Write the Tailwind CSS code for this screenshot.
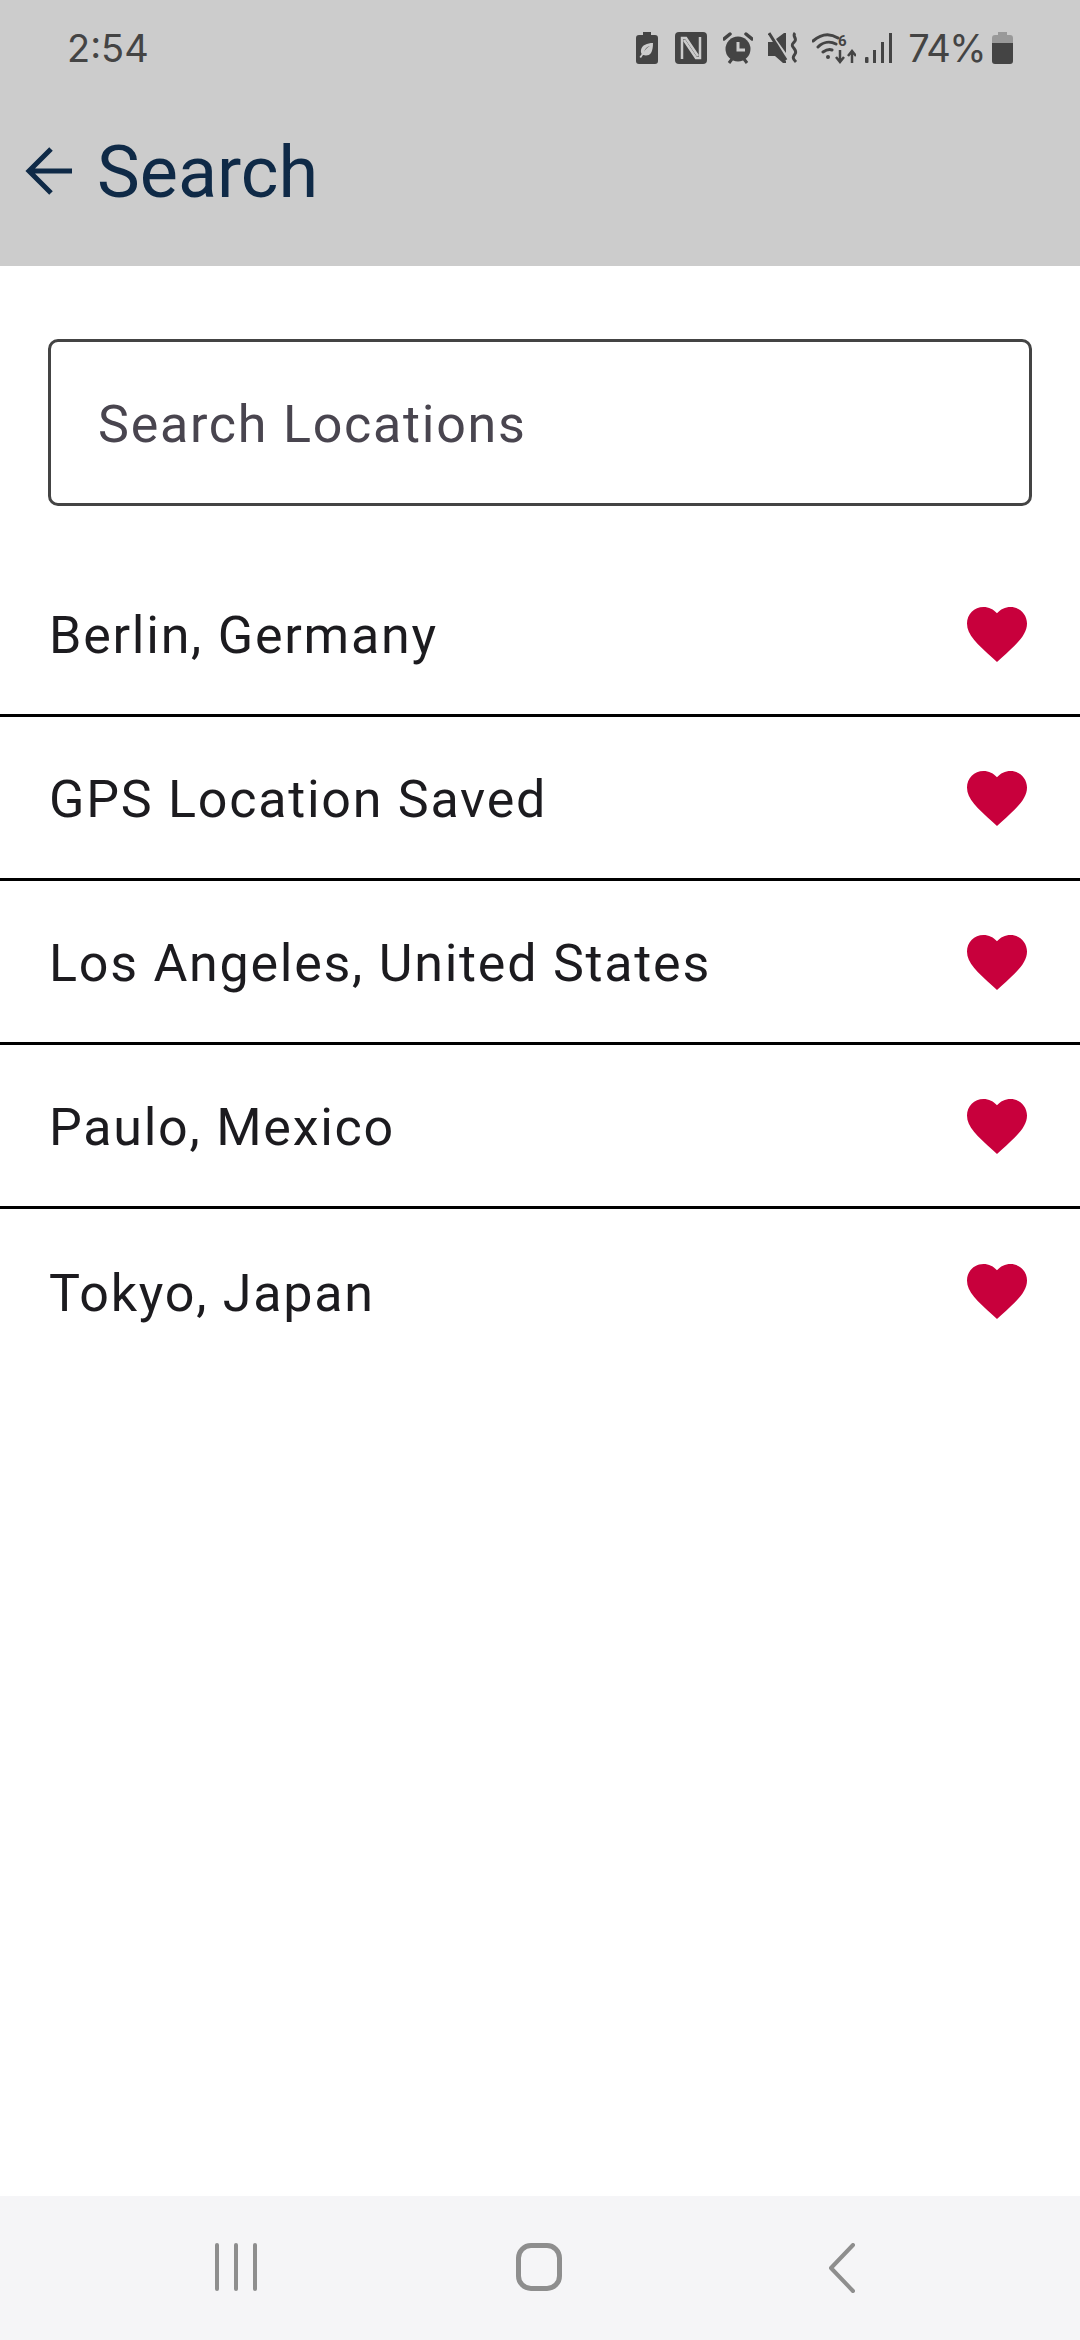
<!DOCTYPE html>
<html>
<head>
<meta charset="utf-8">
<script src="https://cdn.jsdelivr.net/npm/@tailwindcss/browser@4"></script>
</head>
<body class="m-0 bg-white">
<div class="w-[1080px] h-[2340px] flex flex-col bg-white font-['Roboto',sans-serif] overflow-hidden">
  <header class="h-[266px] bg-[#cccccc] flex flex-col shrink-0">
    <div class="h-[95px] flex items-center pl-[67px] pr-[67px] text-[#444444] shrink-0">
      <span class="leading-[48px] font-['Inter',sans-serif] text-[38px]">2:54</span>
      <div class="ml-auto flex items-center">
        <svg class="w-[22px] h-[32px]" viewBox="0 0 22 32"><path fill="#444" fill-rule="evenodd" d="M7 0h8v3h4a3 3 0 0 1 3 3v23a3 3 0 0 1-3 3H3a3 3 0 0 1-3-3V6a3 3 0 0 1 3-3h4zM17 11c-6 0-11 2-12 7-.3 2 .2 3 .7 4L3.500 25l1.500 1 2-3c3 1 6.500.5 8-2 1.500-2.500 2-6 2-10zM14 14c-3 .5-5 2.500-6 6 1-2.500 3-4.500 6-6z"/></svg>
        <svg class="w-[32px] h-[32px] ml-[17px]" viewBox="0 0 32 32"><rect width="32" height="32" rx="4" fill="#444"/><path d="M7 27V6h4l12 18" fill="none" stroke="#ccc" stroke-width="2.500"/><path d="M25 5v21h-4L9 8" fill="none" stroke="#ccc" stroke-width="2.500"/></svg>
        <svg class="w-[30px] h-[32px] ml-[16px]" viewBox="0 0 30 32"><circle cx="15" cy="17" r="12.500" fill="#444"/><path d="M15 10v8h7" fill="none" stroke="#ccc" stroke-width="3"/><path d="M1 7l6-5M29 7l-6-5" stroke="#444" stroke-width="3.500" stroke-linecap="round"/><path d="M6 31l3-4M24 31l-3-4" stroke="#444" stroke-width="3"/></svg>
        <svg class="w-[30px] h-[32px] ml-[15px]" viewBox="0 0 30 32"><path fill="#444" d="M0 10h6L18 28v3h-3L7 24H0zM8 7l8-6h2v20z"/><path d="M3 3l16 26" stroke="#ccc" stroke-width="2"/><path d="M1 1l17 27" stroke="#444" stroke-width="3"/><path d="M27 1c-3 3 2 5 0 8s-4 3-2 6 4 4 2 7-3 4 1 8" fill="none" stroke="#444" stroke-width="3"/></svg>
        <svg class="w-[44px] h-[32px] ml-[14px]" viewBox="0 0 44 32"><path d="M1 9c8-7 17-8 25-3M6 15c5-5 12-6 18-3M11 20c3-2 6-3 9-2" fill="none" stroke="#444" stroke-width="3" stroke-linecap="round"/><circle cx="16" cy="25" r="2" fill="#444"/><text x="26" y="14" font-size="15" font-weight="700" fill="#444" font-family="Roboto">6</text><path d="M28 18v11M24 25l4 5 4-5M40 31V20M36 24l4-5 4 5" fill="none" stroke="#444" stroke-width="2.500"/></svg>
        <svg class="w-[27px] h-[30px] ml-[9px]" viewBox="0 0 27 30"><rect x="0" y="24" width="3.500" height="6" rx="1" fill="#444"/><rect x="8" y="17" width="3" height="13" fill="#444"/><rect x="16" y="9" width="3" height="21" fill="#444"/><rect x="24" y="0" width="3" height="30" fill="#444"/></svg>
        <span class="ml-[16px] leading-[48px] font-['Inter',sans-serif] text-[38px] tracking-[-1.5px]">74%</span>
        <svg class="w-[21px] h-[32px] ml-[7px]" viewBox="0 0 21 32"><path d="M6 0h9v3h3a3 3 0 0 1 3 3v5H0V6a3 3 0 0 1 3-3h3z" fill="#999"/><path d="M0 11h21v18a3 3 0 0 1-3 3H3a3 3 0 0 1-3-3z" fill="#444"/></svg>
      </div>
    </div>
    <div class="flex items-center pl-[25px] h-[60px] mt-[46px] text-[#0f2a47]">
      <svg class="w-[48px] h-[50px]" viewBox="0 0 48 50"><path d="M47 25H5M26 3L4 25l22 22" fill="none" stroke="#0f2a47" stroke-width="5"/></svg>
      <h1 class="ml-[24px] text-[72px] leading-[60px] font-normal translate-y-[2px]">Search</h1>
    </div>
  </header>

  <main class="flex-1 flex flex-col">
    <div class="mx-[48px] mt-[73px] h-[167px] border-[3px] border-[#444444] rounded-[10px] flex items-center pl-[47px] pt-[5px] text-[52px] tracking-[1.75px] text-[#49454f]">Search Locations</div>
    <ul class="mt-[47px] text-[#1c1b1f] text-[52px] tracking-[1.75px]">
      <li class="h-[164px] flex items-center justify-between pl-[49px] pr-[47px] border-b-[3px] border-black">
        <span class="pt-[5px]">Berlin, Germany</span>
        <svg class="w-[72px] h-[72px]" viewBox="0 0 24 24"><path fill="#c8003c" d="M12 21.350l-1.450-1.320C5.400 15.360 2 12.280 2 8.500 2 5.420 4.420 3 7.500 3c1.740 0 3.410.81 4.500 2.090C13.090 3.810 14.760 3 16.500 3 19.580 3 22 5.420 22 8.500c0 3.780-3.400 6.860-8.550 11.540L12 21.350z"/></svg>
      </li>
      <li class="h-[164px] flex items-center justify-between pl-[49px] pr-[47px] border-b-[3px] border-black">
        <span class="pt-[5px]">GPS Location Saved</span>
        <svg class="w-[72px] h-[72px]" viewBox="0 0 24 24"><path fill="#c8003c" d="M12 21.350l-1.450-1.320C5.400 15.360 2 12.280 2 8.500 2 5.420 4.420 3 7.500 3c1.740 0 3.410.81 4.500 2.090C13.090 3.810 14.760 3 16.500 3 19.580 3 22 5.420 22 8.500c0 3.780-3.400 6.860-8.550 11.540L12 21.350z"/></svg>
      </li>
      <li class="h-[164px] flex items-center justify-between pl-[49px] pr-[47px] border-b-[3px] border-black">
        <span class="pt-[5px]">Los Angeles, United States</span>
        <svg class="w-[72px] h-[72px]" viewBox="0 0 24 24"><path fill="#c8003c" d="M12 21.350l-1.450-1.320C5.400 15.360 2 12.280 2 8.500 2 5.420 4.420 3 7.500 3c1.740 0 3.410.81 4.500 2.090C13.090 3.810 14.760 3 16.500 3 19.580 3 22 5.420 22 8.500c0 3.780-3.400 6.860-8.550 11.540L12 21.350z"/></svg>
      </li>
      <li class="h-[164px] flex items-center justify-between pl-[49px] pr-[47px] border-b-[3px] border-black">
        <span class="pt-[5px]">Paulo, Mexico</span>
        <svg class="w-[72px] h-[72px]" viewBox="0 0 24 24"><path fill="#c8003c" d="M12 21.350l-1.450-1.320C5.400 15.360 2 12.280 2 8.500 2 5.420 4.420 3 7.500 3c1.740 0 3.410.81 4.500 2.090C13.090 3.810 14.760 3 16.500 3 19.580 3 22 5.420 22 8.500c0 3.780-3.400 6.860-8.550 11.540L12 21.350z"/></svg>
      </li>
      <li class="h-[164px] flex items-center justify-between pl-[49px] pr-[47px]">
        <span class="pt-[5px]">Tokyo, Japan</span>
        <svg class="w-[72px] h-[72px]" viewBox="0 0 24 24"><path fill="#c8003c" d="M12 21.350l-1.450-1.320C5.400 15.360 2 12.280 2 8.500 2 5.420 4.420 3 7.500 3c1.740 0 3.410.81 4.500 2.090C13.090 3.810 14.760 3 16.500 3 19.580 3 22 5.420 22 8.500c0 3.780-3.400 6.860-8.550 11.540L12 21.350z"/></svg>
      </li>
    </ul>
  </main>

  <nav class="h-[144px] bg-[#f5f5f7] shrink-0 flex items-start pt-[47px] pl-[215px]">
    <div class="flex gap-[15px] h-[48px]">
      <div class="w-[4px] h-full rounded-full bg-[#8e8e8e]"></div>
      <div class="w-[4px] h-full rounded-full bg-[#8e8e8e]"></div>
      <div class="w-[4px] h-full rounded-full bg-[#8e8e8e]"></div>
    </div>
    <div class="ml-[259px] w-[46px] h-[48px] border-[5px] border-[#8e8e8e] rounded-[15px]"></div>
    <svg class="ml-[266px] w-[28px] h-[50px]" viewBox="0 0 28 50"><path d="M25 2L3 25l22 23" fill="none" stroke="#8e8e8e" stroke-width="4" stroke-linecap="round" stroke-linejoin="round"/></svg>
  </nav>
</div>
</body>
</html>
